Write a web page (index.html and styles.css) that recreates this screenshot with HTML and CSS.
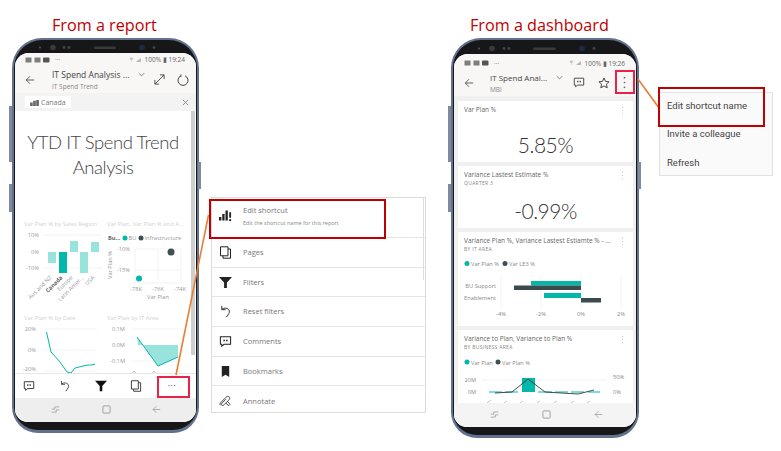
FILE: index.html
```html
<!DOCTYPE html>
<html lang="en">
<head>
  <meta charset="UTF-8">
  <title>Edit shortcut</title>
  <link rel="stylesheet" href="styles.css">
</head>
<body>
  <svg class="defs" width="0" height="0">
    <symbol id="i-back" viewBox="0 0 12 12"><path d="M11 6H1.5M6 1.5L1.5 6 6 10.5" fill="none" stroke="currentColor" stroke-width="1"/></symbol>
    <symbol id="i-chev" viewBox="0 0 10 6"><path d="M1 1l4 4 4-4" fill="none" stroke="currentColor" stroke-width="1"/></symbol>
    <symbol id="i-comment" viewBox="0 0 14 12"><path d="M1.5 1h11v8H5.5L3 11V9H1.5z" fill="none" stroke="currentColor" stroke-width="1.1"/><rect x="4.8" y="4" width="1.5" height="1.8" fill="currentColor"/><rect x="7.7" y="4" width="1.5" height="1.8" fill="currentColor"/></symbol>
    <symbol id="i-undo" viewBox="0 0 12 14"><path d="M2 1v4h4M2 5c2-2.5 7-2 8 1 .8 2.5-1 4-3 7" fill="none" stroke="currentColor" stroke-width="1"/></symbol>
    <symbol id="i-filter" viewBox="0 0 14 12"><path d="M0 0h14L8.500 6v6h-3V6z" fill="currentColor"/></symbol>
    <symbol id="i-pages" viewBox="0 0 12 13"><path d="M1 .8h7.500v9H1z" fill="none" stroke="currentColor" stroke-width="1"/><path d="M8.500 3H11v9.200H3.500V9.800" fill="none" stroke="currentColor" stroke-width="1"/></symbol>
    <symbol id="i-recent" viewBox="0 0 12 10"><path d="M11 1.5H5v3H1M1 8.500h6v-3h4" fill="none" stroke="currentColor" stroke-width="1"/></symbol>
    <symbol id="i-home" viewBox="0 0 10 10"><rect x="1" y="1" width="8" height="8" rx="1" fill="none" stroke="currentColor" stroke-width="1"/></symbol>
    <symbol id="i-dots" viewBox="0 0 3 15"><circle cx="1.5" cy="2" r="1" fill="currentColor"/><circle cx="1.5" cy="7.5" r="1" fill="currentColor"/><circle cx="1.5" cy="13" r="1" fill="currentColor"/></symbol>
    <symbol id="i-status" viewBox="0 0 26 6"><rect x=".5" y=".5" width="6" height="5" fill="currentColor" opacity=".75"/><rect x="9.500" y=".5" width="6" height="5" fill="currentColor" opacity=".75"/><rect x="18" y=".5" width="6.500" height="5" rx="1" fill="currentColor"/></symbol>
    <symbol id="i-signal" viewBox="0 0 20 7"><path d="M1 1h5M2 3h3M3 5h1" stroke="currentColor" fill="none" stroke-width=".8"/><path d="M10 6.500L17 .5v6z" fill="currentColor" opacity=".6"/></symbol>
  </svg>

  <main class="canvas">
    <h2 class="caption caption-report">From a report</h2>
    <h2 class="caption caption-dash">From a dashboard</h2>

    <!-- report phone -->
    <section class="phone phone-report">
      <span class="side-btn side-a"></span>
      <span class="side-btn side-b"></span>
      <span class="side-btn side-c"></span>
      <svg class="bezel" viewBox="15 41 181 12">
        <circle cx="40" cy="48" r="1" fill="#555"/>
        <circle cx="53" cy="48" r="2.8" fill="#3a3a3a"/>
        <circle cx="64" cy="48" r="1.4" fill="#444"/>
        <circle cx="69" cy="48" r="1.4" fill="#444"/>
        <rect x="94" y="47" width="22" height="2.5" rx="1.2" fill="#3a3a3a"/>
        <circle cx="142" cy="48" r="2.8" fill="#1c2a48"/>
        <circle cx="154" cy="48" r="1.4" fill="#444"/>
      </svg>
      <div class="screen screen-report">
        <div class="status">
          <svg class="status-icons"><use href="#i-status"/></svg>
          <span class="status-more">···</span>
          <span class="status-right"><svg class="status-signal"><use href="#i-signal"/></svg>100% ▮ 19:24</span>
        </div>
        <header class="appbar">
          <svg class="ic-back"><use href="#i-back"/></svg>
          <div class="appbar-title">
            <div class="title-row">IT Spend Analysis ... <svg class="ic-chev"><use href="#i-chev"/></svg></div>
            <div class="title-sub">IT Spend Trend</div>
          </div>
          <svg class="ic-expand" viewBox="0 0 12 12"><path d="M1 11L11 1M6.500 1H11v4.500M1 6.500V11h4.500" fill="none" stroke="currentColor" stroke-width="1"/></svg>
          <svg class="ic-refresh" viewBox="0 0 12 12"><path d="M4 1.800a5 5 0 1 0 4 0M4 .5l-.2 2.500" fill="none" stroke="currentColor" stroke-width="1"/></svg>
        </header>
        <div class="filterbar">
          <span class="chip">
            <svg class="chip-icon" viewBox="0 0 10 8"><path d="M0 8V4h3v4zM3.500 8V2h3v6zM7 8V1h3v7z" fill="#666"/></svg>Canada
          </span>
          <svg class="ic-close" viewBox="0 0 8 8"><path d="M1 1l6 6M7 1L1 7" stroke="#777" stroke-width=".9"/></svg>
        </div>
        <div class="report">
          <span class="scroll"></span>
          <h1 class="report-title">YTD IT Spend Trend Analysis</h1>
          <div class="chart-grid">
            <svg class="cell" viewBox="15 218 88 94">
              <text x="24" y="226" class="t-title">Var Plan % by Sales Region</text>
              <path d="M44 235H102M44 268H102" class="grid"/>
              <text x="39" y="237" class="t-ax" text-anchor="end">10%</text>
              <text x="39" y="254" class="t-ax" text-anchor="end">0%</text>
              <text x="39" y="270" class="t-ax" text-anchor="end">-10%</text>
              <rect x="48" y="252" width="8" height="11" fill="#99e3dd"/>
              <rect x="59" y="252" width="8" height="21" fill="#01b8aa"/>
              <rect x="70" y="241" width="8" height="11" fill="#99e3dd"/>
              <rect x="80" y="252" width="8" height="21" fill="#99e3dd"/>
              <rect x="91" y="242" width="8" height="10" fill="#99e3dd"/>
              <text transform="translate(52 278) rotate(-45)" class="t-ax" text-anchor="end">Aus and NZ</text>
              <text transform="translate(63 278) rotate(-45)" class="t-ax t-bold" text-anchor="end">Canada</text>
              <text transform="translate(73 278) rotate(-45)" class="t-ax" text-anchor="end">Europe</text>
              <text transform="translate(84 278) rotate(-45)" class="t-ax" text-anchor="end">Latin Amer...</text>
              <text transform="translate(95 278) rotate(-45)" class="t-ax" text-anchor="end">USA</text>
            </svg>
            <svg class="cell" viewBox="103 218 88 94">
              <text x="107" y="226" class="t-title">Var Plan, Var Plan % and A...</text>
              <text x="108" y="240" class="t-ax t-bold">Bu...</text>
              <circle cx="125" cy="238" r="2.5" fill="#01b8aa"/>
              <text x="128.5" y="240" class="t-ax">BU</text>
              <circle cx="141" cy="238" r="2.5" fill="#3f4f52"/>
              <text x="144.5" y="240" class="t-ax">Infrastructure</text>
              <path d="M135 249H181M135 270H181M135 283H181M135 249V283M158 249V283M181 249V283" class="grid"/>
              <text x="130" y="251" class="t-ax" text-anchor="end">-10%</text>
              <text x="130" y="272" class="t-ax" text-anchor="end">-15%</text>
              <text x="136" y="291" class="t-ax" text-anchor="middle">-78K</text>
              <text x="158" y="291" class="t-ax" text-anchor="middle">-76K</text>
              <text x="180" y="291" class="t-ax" text-anchor="middle">-74K</text>
              <text x="158" y="299" class="t-ax" text-anchor="middle">Var Plan</text>
              <text transform="translate(112 279) rotate(-90)" class="t-ax">Var Plan %</text>
              <circle cx="139" cy="278.5" r="3" fill="#01b8aa"/>
              <circle cx="171" cy="252" r="3.5" fill="#3f4f52"/>
            </svg>
            <svg class="cell cell-low" viewBox="15 312 88 61">
              <text x="24" y="320" class="t-title">Var Plan % by Date</text>
              <path d="M44 329H97M44 350H97M44 371H97" class="grid"/>
              <text x="36" y="331" class="t-ax" text-anchor="end">20%</text>
              <text x="36" y="352" class="t-ax" text-anchor="end">0%</text>
              <text x="36" y="371" class="t-ax" text-anchor="end">-20%</text>
              <path d="M46.5 332L51 352l9 10 7 10 4 1 4-5 8-2 5-1 4 0 3-1" fill="none" stroke="#01b8aa" stroke-width="1"/>
            </svg>
            <svg class="cell cell-low" viewBox="103 312 88 61">
              <text x="107" y="320" class="t-title">Var Plan by IT Area</text>
              <path d="M131 329H178M131 361H178" class="grid"/>
              <text x="125" y="331" class="t-ax" text-anchor="end">0.1M</text>
              <text x="125" y="347" class="t-ax" text-anchor="end">0.0M</text>
              <text x="125" y="363" class="t-ax" text-anchor="end">-0.1M</text>
              <path d="M137 337L138 345H178V357L158 366z" fill="#99e3dd"/>
              <path d="M137 337L158 366 178 357" fill="none" stroke="#01b8aa" stroke-width="1"/>
              <path d="M134 371l2 2.500h-4zM154 371l2 2.500h-4z" fill="none" stroke="#999" stroke-width=".6"/>
            </svg>
          </div>
        </div>
        <nav class="toolbar">
          <svg class="ic-tool"><use href="#i-comment"/></svg>
          <svg class="ic-tool"><use href="#i-undo"/></svg>
          <svg class="ic-tool ic-filter-tool"><use href="#i-filter"/></svg>
          <svg class="ic-tool"><use href="#i-pages"/></svg>
          <span class="ic-more">···</span>
        </nav>
        <div class="softkeys">
          <svg class="key"><use href="#i-recent"/></svg>
          <svg class="key"><use href="#i-home"/></svg>
          <svg class="key"><use href="#i-back"/></svg>
        </div>
      </div>
    </section>

    <!-- report menu -->
    <section class="sheet">
      <span class="sheet-scroll"></span>
      <div class="sheet-row sheet-first">
        <svg class="sheet-icon" viewBox="0 0 14 13"><path d="M0 8h2.500v4H0zM3.500 5H6v7H3.500zM7 1h2.500v11H7zM11 3h2v6h-2z" fill="#222"/><circle cx="12" cy="11.5" r="1.2" fill="#222"/></svg>
        <div>
          <div class="sheet-label">Edit shortcut</div>
          <div class="sheet-sub">Edit the shortcut name for this report</div>
        </div>
      </div>
      <div class="sheet-row"><svg class="sheet-icon"><use href="#i-pages"/></svg><div class="sheet-label">Pages</div></div>
      <div class="sheet-row"><svg class="sheet-icon"><use href="#i-filter"/></svg><div class="sheet-label">Filters</div></div>
      <div class="sheet-row"><svg class="sheet-icon"><use href="#i-undo"/></svg><div class="sheet-label">Reset filters</div></div>
      <div class="sheet-row"><svg class="sheet-icon"><use href="#i-comment"/></svg><div class="sheet-label">Comments</div></div>
      <div class="sheet-row"><svg class="sheet-icon" viewBox="0 0 14 14"><path d="M3 1h8v12L7 10.500 3 13z" fill="#222"/></svg><div class="sheet-label">Bookmarks</div></div>
      <div class="sheet-row"><svg class="sheet-icon" viewBox="0 0 14 14"><path d="M1.500 11c-1-1 0-2.500 1-3.500l5-5c1-1 2.500-1.500 3.500-.5s.5 2.500-.5 3.500l-5 5c-1 1-2 1-2.500.5s-.5-1.500.5-2.500l4-4M9 7l3 3-1.500 1.500L7.500 9" fill="none" stroke="#222" stroke-width=".9"/></svg><div class="sheet-label">Annotate</div></div>
    </section>

    <!-- dashboard phone -->
    <section class="phone phone-dash">
      <span class="side-btn side-a"></span>
      <span class="side-btn side-b"></span>
      <span class="side-btn side-c"></span>
      <svg class="bezel bezel-dash" viewBox="454 41 182 13">
        <circle cx="479" cy="49" r="1" fill="#555"/>
        <circle cx="492" cy="49" r="2.8" fill="#3a3a3a"/>
        <circle cx="504" cy="49" r="1.4" fill="#444"/>
        <circle cx="509" cy="49" r="1.4" fill="#444"/>
        <rect x="533" y="48" width="23" height="2.5" rx="1.2" fill="#3a3a3a"/>
        <circle cx="582" cy="49" r="2.8" fill="#1c2a48"/>
        <circle cx="594" cy="49" r="1.4" fill="#444"/>
      </svg>
      <div class="screen screen-dash">
        <div class="status status-dash">
          <svg class="status-icons"><use href="#i-status"/></svg>
          <span class="status-more">···</span>
          <span class="status-right"><svg class="status-signal"><use href="#i-signal"/></svg>100% ▮ 19:26</span>
        </div>
        <header class="appbar appbar-dash">
          <svg class="ic-back"><use href="#i-back"/></svg>
          <div class="appbar-title">
            <div class="title-row">IT Spend Anal... <svg class="ic-chev"><use href="#i-chev"/></svg></div>
            <div class="title-sub">MBI</div>
          </div>
          <svg class="ic-head"><use href="#i-comment"/></svg>
          <svg class="ic-head ic-star" viewBox="0 0 12 12"><path d="M6 1l1.500 3.400 3.600.4-2.700 2.400.8 3.600L6 9l-3.200 1.800.8-3.600L.9 4.800l3.600-.4z" fill="none" stroke="currentColor" stroke-width="1"/></svg>
          <svg class="ic-kebab"><use href="#i-dots"/></svg>
        </header>
        <div class="tiles">
          <article class="tile tile-kpi-a">
            <svg class="tile-dots"><use href="#i-dots"/></svg>
            <div class="tile-title">Var Plan %</div>
            <div class="kpi">5.85%</div>
          </article>
          <article class="tile tile-kpi-b">
            <svg class="tile-dots"><use href="#i-dots"/></svg>
            <div class="tile-title">Variance Lastest Estimate %</div>
            <div class="tile-sub">QUARTER 3</div>
            <div class="kpi">-0.99%</div>
          </article>
          <article class="tile tile-bars">
            <svg class="tile-dots"><use href="#i-dots"/></svg>
            <div class="tile-title">Variance Plan %, Variance Lastest Estiamte % - ...</div>
            <div class="tile-sub">BY IT AREA</div>
            <svg class="tile-chart" viewBox="459 256 172 70">
              <circle cx="468" cy="263.5" r="2.5" fill="#01b8aa"/>
              <text x="472" y="266" class="t-ax t-dark">Var Plan %</text>
              <circle cx="506" cy="263.5" r="2.5" fill="#3f4f52"/>
              <text x="510" y="266" class="t-ax t-dark">Var LE3 %</text>
              <path d="M502 275V308M542 275V308M582 275V308M622 275V308" class="grid"/>
              <text x="497" y="288" class="t-ax t-dark" text-anchor="end">BU Support</text>
              <text x="497" y="300" class="t-ax t-dark" text-anchor="end">Enablement</text>
              <rect x="532" y="281" width="50" height="4.5" fill="#01b8aa"/>
              <rect x="515" y="285.5" width="67" height="4.5" fill="#3a4a4d"/>
              <rect x="545" y="293" width="37" height="5" fill="#01b8aa"/>
              <rect x="582" y="298" width="20" height="4.5" fill="#3a4a4d"/>
              <text x="502" y="316" class="t-ax t-dark" text-anchor="middle">-4%</text>
              <text x="542" y="316" class="t-ax t-dark" text-anchor="middle">-2%</text>
              <text x="582" y="316" class="t-ax t-dark" text-anchor="middle">0%</text>
              <text x="622" y="316" class="t-ax t-dark" text-anchor="middle">2%</text>
            </svg>
          </article>
          <article class="tile tile-combo">
            <svg class="tile-dots"><use href="#i-dots"/></svg>
            <div class="tile-title">Variance to Plan, Variance to Plan %</div>
            <div class="tile-sub">BY BUSINESS AREA</div>
            <svg class="tile-chart" viewBox="459 354 172 50">
              <circle cx="468" cy="362" r="2.5" fill="#01b8aa"/>
              <text x="472" y="364.5" class="t-ax t-dark">Var Plan</text>
              <circle cx="499" cy="362" r="2.5" fill="#3f4f52"/>
              <text x="503" y="364.5" class="t-ax t-dark">Var Plan %</text>
              <path d="M483 380H608" class="grid"/>
              <text x="477" y="382" class="t-ax t-dark" text-anchor="end">20M</text>
              <text x="477" y="394" class="t-ax t-dark" text-anchor="end">0M</text>
              <text x="614" y="379" class="t-ax t-dark">50%</text>
              <text x="614" y="394" class="t-ax t-dark">0%</text>
              <rect x="523" y="378" width="13" height="14" fill="#01b8aa"/>
              <path d="M490 392H503M506 392H519M539 392H553M556 392H569M572 392H585M589 392H601" stroke="#01b8aa" stroke-width="1.2"/>
              <path d="M496 393L513 392 529 379 546 392 562 393 579 394 595 390" fill="none" stroke="#2f3a3c" stroke-width=".9"/>
              <path d="M488 403l4-3M505 403l3-2M521 403l3-2M538 403l3-2M555 403l3-2M572 403l3-2M588 403l3-2" stroke="#bbb" stroke-width=".8"/>
            </svg>
          </article>
        </div>
        <div class="softkeys softkeys-dash">
          <svg class="key"><use href="#i-recent"/></svg>
          <svg class="key"><use href="#i-home"/></svg>
          <svg class="key"><use href="#i-back"/></svg>
        </div>
      </div>
    </section>

    <!-- dashboard menu -->
    <section class="popup">
      <div class="popup-row">Edit shortcut name</div>
      <div class="popup-row">Invite a colleague</div>
      <div class="popup-row">Refresh</div>
    </section>

    <!-- callouts over the phones and menus -->
    <svg class="connectors" viewBox="0 0 781 451">
      <path d="M176 375L208.500 215M638 79L659 108" fill="none" stroke="#ed7d31" stroke-width="1.6"/>
    </svg>
    <span class="mark mark-more"></span>
    <span class="mark mark-kebab"></span>
    <span class="callout callout-sheet"></span>
    <span class="callout callout-popup"></span>
  </main>
</body>
</html>
```

FILE: styles.css
```css
body {
  margin: 0;
  background: white;
  font-family: "Open Sans", sans-serif;
}
.defs {
  position: absolute;
}
.canvas {
  position: relative;
  width: 781px;
  height: 451px;
  overflow: hidden;
}
.caption {
  position: absolute;
  top: 14px;
  margin: 0;
  font-size: 16.2px;
  font-weight: 400;
  line-height: 22px;
  color: #c00000;
}
.caption-report {
  left: 52px;
}
.caption-dash {
  left: 470px;
}

/* phone shell */
.phone {
  position: absolute;
  top: 38px;
  box-sizing: border-box;
  display: flex;
  flex-direction: column;
  padding: 0 1px;
  border: 2px solid #62728c;
  border-bottom-width: 3px;
  border-radius: 30px 30px 26px 26px;
  background: #17171a;
}
.phone-report {
  left: 12px;
  width: 187px;
  height: 395px;
}
.phone-dash {
  left: 451px;
  width: 188px;
  height: 400px;
}
.side-btn {
  position: absolute;
  width: 3px;
  background: #7f8b9c;
}
.side-a {
  left: -5px;
  top: 66px;
  height: 56px;
}
.side-b {
  left: -5px;
  top: 144px;
  height: 28px;
}
.side-c {
  right: -4px;
  top: 122px;
  height: 27px;
}
.bezel {
  display: block;
  flex: none;
  width: 100%;
  height: 13px;
}
.bezel-dash {
  height: 14px;
}
.screen {
  display: flex;
  flex-direction: column;
  height: 369px;
  overflow: hidden;
  border-radius: 14px 14px 13px 13px;
  background: white;
  color: #555;
}
.screen-dash {
  height: 373px;
}

/* status + app bar */
.status {
  flex: none;
  display: flex;
  align-items: center;
  height: 13px;
  padding: 0 11px 0 10px;
  background: #f8f7f5;
  font-size: 6.5px;
  color: #666;
}
.status-dash {
  height: 15px;
  padding-top: 3px;
  box-sizing: border-box;
}
.status-icons {
  width: 26px;
  height: 6px;
  color: #555;
}
.status-more {
  margin-left: 4px;
}
.status-right {
  display: flex;
  align-items: center;
  gap: 2px;
  margin-left: auto;
  white-space: nowrap;
}
.status-signal {
  width: 14px;
  height: 6px;
  color: #888;
}
.appbar {
  flex: none;
  display: flex;
  align-items: center;
  height: 27px;
  padding: 0 5px 0 10px;
  background: #f8f7f5;
  color: #444;
}
.appbar-dash {
  padding-right: 0;
}
.ic-back {
  flex: none;
  width: 10px;
  height: 10px;
  color: #444;
}
.appbar-title {
  width: 100px;
  margin-left: 17px;
  white-space: nowrap;
}
.appbar-dash .appbar-title {
  width: 83px;
  margin-left: 16px;
}
.title-row {
  display: flex;
  align-items: center;
  font-size: 8.5px;
  line-height: 12px;
  color: #444;
}
.appbar-dash .title-row {
  font-size: 8px;
}
.title-sub {
  margin-top: 1px;
  font-size: 6.5px;
  line-height: 9px;
  color: #888;
}
.ic-chev {
  width: 7px;
  height: 5px;
  margin-left: 9px;
  color: #555;
}
.ic-expand {
  width: 11px;
  height: 11px;
  margin-left: 2px;
}
.ic-refresh {
  width: 12px;
  height: 12px;
  margin-left: 12px;
}
.ic-head {
  flex: none;
  width: 12px;
  height: 11px;
  margin-right: 13px;
  color: #444;
}
.ic-star {
  height: 12px;
  margin-right: 13px;
}
.ic-kebab {
  flex: none;
  width: 3px;
  height: 13px;
  color: #666;
}

/* report view */
.filterbar {
  flex: none;
  display: flex;
  align-items: center;
  justify-content: space-between;
  height: 18px;
  padding: 0 7px 0 10px;
  background: #f3f3f3;
}
.chip {
  display: flex;
  align-items: center;
  gap: 2px;
  height: 12px;
  padding: 0 5px;
  background: white;
  font-size: 7px;
  color: #777;
}
.chip-icon {
  width: 9px;
  height: 7px;
}
.ic-close {
  width: 7px;
  height: 7px;
}
.report {
  position: relative;
  flex: none;
  height: 262px;
}
.scroll {
  position: absolute;
  top: 0;
  right: 1px;
  width: 4px;
  height: 244px;
  background: #cfcfcf;
}
.report-title {
  box-sizing: border-box;
  width: 176px;
  height: 107px;
  margin: 0;
  padding: 19px 8px 0;
  font-family: Lato, sans-serif;
  font-size: 18.5px;
  font-weight: 300;
  line-height: 25px;
  letter-spacing: -.45px;
  text-align: center;
  color: #444;
}
.chart-grid {
  display: grid;
  grid-template-columns: 88px 88px;
  grid-template-rows: 94px 61px;
}
.cell {
  display: block;
  width: 88px;
  height: 94px;
}
.cell-low {
  height: 61px;
}
.grid {
  fill: none;
  stroke: #eeeeee;
  stroke-width: .7;
}
.t-title {
  font-size: 5.9px;
  fill: #d2d2d2;
}
.t-ax {
  font-size: 5.7px;
  fill: #9a9a9a;
}
.t-bold {
  font-weight: 700;
  fill: #666;
}
.t-dark {
  fill: #888;
}
.toolbar {
  flex: none;
  display: flex;
  align-items: center;
  justify-content: space-between;
  box-sizing: border-box;
  height: 25px;
  padding: 0 18px 0 8px;
  border-top: 1px solid #e6e6e6;
  color: #333;
}
.ic-tool {
  width: 12px;
  height: 12px;
}
.ic-filter-tool {
  color: #111;
}
.ic-more {
  width: 12px;
  font-size: 9px;
  line-height: 12px;
  letter-spacing: .5px;
  text-align: center;
}
.softkeys {
  flex: none;
  display: flex;
  align-items: center;
  justify-content: space-between;
  box-sizing: border-box;
  height: 24px;
  padding: 0 35px 2px 36px;
  background: #eeeeee;
  color: #999;
}
.softkeys-dash {
  padding: 0 33px 2px 36px;
  background: #f4f4f4;
}
.key {
  width: 9px;
  height: 9px;
}

/* dashboard view */
.tiles {
  flex: 1;
  min-height: 0;
  display: flex;
  flex-direction: column;
  gap: 4px;
  padding: 5px 3px 0 4px;
  overflow: hidden;
  background: #f0f0f0;
}
.tile {
  position: relative;
  flex: none;
  box-sizing: border-box;
  padding: 4px 6px 0;
  background: white;
}
.tile-kpi-a {
  height: 61px;
}
.tile-kpi-b {
  height: 62px;
}
.tile-bars {
  height: 94px;
}
.tile-combo {
  height: 74px;
}
.tile-dots {
  position: absolute;
  top: 5px;
  right: 9px;
  width: 3px;
  height: 9px;
  color: #bbb;
}
.tile-title {
  font-size: 6.5px;
  line-height: 10px;
  white-space: nowrap;
  color: #666;
}
.tile-sub {
  font-size: 5px;
  line-height: 7px;
  letter-spacing: .3px;
  color: #888;
}
.kpi {
  margin-top: 16px;
  font-family: Lato, sans-serif;
  font-size: 21px;
  font-weight: 300;
  line-height: 28px;
  letter-spacing: -.5px;
  text-align: center;
  color: #333;
}
.tile-kpi-b .kpi {
  margin-top: 10px;
}
.tile-chart {
  position: absolute;
  left: 0;
  bottom: 0;
  width: 172px;
}
.tile-bars .tile-chart {
  height: 70px;
}
.tile-combo .tile-chart {
  height: 50px;
}

/* menus */
.sheet {
  position: absolute;
  left: 211px;
  top: 197px;
  box-sizing: border-box;
  width: 215px;
  height: 216px;
  border: 1px solid #dcdcdc;
  background: white;
}
.sheet-scroll {
  position: absolute;
  top: 0;
  right: 1px;
  width: 1px;
  height: 82px;
  background: #dcdcdc;
}
.sheet-row {
  box-sizing: border-box;
  display: flex;
  align-items: center;
  gap: 11px;
  height: 29.7px;
  padding-left: 7px;
  border-bottom: 1px solid #e4e4e4;
  color: #222;
}
.sheet-first {
  height: 40px;
  padding-bottom: 4px;
}
.sheet-row:last-child {
  border-bottom: 0;
}
.sheet-icon {
  flex: none;
  width: 13px;
  height: 13px;
}
.sheet-label {
  font-size: 7.5px;
  line-height: 11px;
  color: #777;
}
.sheet-sub {
  margin-top: 3px;
  font-size: 5.5px;
  line-height: 8px;
  color: #888;
}
.popup {
  position: absolute;
  left: 659px;
  top: 92px;
  box-sizing: border-box;
  width: 114px;
  height: 84px;
  border: 1px solid #e2e2e2;
  background: #fafafa;
}
.popup-row {
  display: flex;
  align-items: center;
  height: 28.5px;
  padding-left: 7px;
  font-family: Roboto, sans-serif;
  font-size: 9.5px;
  color: #444;
}
.popup-row:first-child {
  margin-top: -2px;
}

/* callouts */
.connectors {
  position: absolute;
  inset: 0;
  width: 781px;
  height: 451px;
}
.mark,
.callout {
  position: absolute;
  box-sizing: border-box;
}
.mark {
  border: 2px solid #e8234a;
}
.mark-more {
  left: 157px;
  top: 376px;
  width: 33px;
  height: 22px;
}
.mark-kebab {
  left: 615px;
  top: 70px;
  width: 20px;
  height: 24px;
}
.callout {
  border: 2px solid #c00000;
}
.callout-sheet {
  left: 209px;
  top: 199px;
  width: 177px;
  height: 40px;
}
.callout-popup {
  left: 658px;
  top: 87px;
  width: 107px;
  height: 40px;
}
```
